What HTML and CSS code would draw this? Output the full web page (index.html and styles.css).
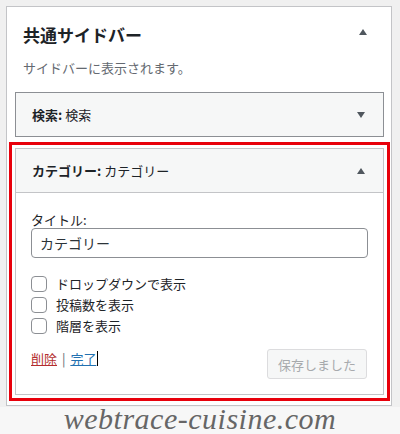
FILE: index.html
```html
<!DOCTYPE html>
<html lang="ja">
<head>
    <meta charset="UTF-8">
    <meta name="viewport" content="width=device-width, initial-scale=1.0">
    <title>共通サイドバー</title>
    <link rel="stylesheet" href="styles.css">
</head>
<body>
    <div class="sidebar">
        <div class="sidebar-head">
            <h2>共通サイドバー</h2>
            <span class="arrow up"></span>
        </div>
        <p class="sidebar-desc">サイドバーに表示されます。</p>

        <div class="widget">
            <div class="widget-top">
                <h3><b>検索:</b> 検索</h3>
                <span class="arrow down"></span>
            </div>
        </div>

        <div class="widget open">
            <div class="widget-top">
                <h3><b>カテゴリー:</b> カテゴリー</h3>
                <span class="arrow up"></span>
            </div>
            <div class="widget-body">
                <label class="field-label" for="title">タイトル:</label>
                <input type="text" id="title" class="field-input" value="カテゴリー">

                <div class="checks">
                    <label class="check"><input type="checkbox"><span>ドロップダウンで表示</span></label>
                    <label class="check"><input type="checkbox"><span>投稿数を表示</span></label>
                    <label class="check"><input type="checkbox"><span>階層を表示</span></label>
                </div>

                <div class="widget-actions">
                    <div class="links">
                        <a href="#" class="delete">削除</a>
                        <span class="sep">|</span>
                        <a href="#" class="done">完了</a><span class="caret"></span>
                    </div>
                    <button class="save-btn" disabled>保存しました</button>
                </div>
            </div>
        </div>
    </div>

    <div class="footer">webtrace-cuisine.com</div>
</body>
</html>
```

FILE: styles.css
```css
* {
    margin: 0;
    padding: 0;
    box-sizing: border-box;
}

body {
    background: #f0f0f0;
    font-family: "Noto Sans CJK JP", "Noto Sans", sans-serif;
    font-size: 13px;
    color: #1d2327;
}

.sidebar {
    margin: 6px 0 0 6px;
    width: 386px;
    height: 400px;
    background: #fff;
    border: 1px solid #c3c4c7;
    padding-top: 16px;
}

.sidebar-head {
    display: flex;
    align-items: center;
    justify-content: space-between;
    padding: 0 24px 0 16px;
    height: 24px;
}

.sidebar-head h2 {
    font-size: 17px;
    font-weight: bold;
    line-height: 24px;
}

.sidebar-head .arrow {
    margin-top: -6px;
}

.sidebar-desc {
    margin: 11px 0 14px;
    padding: 0 16px;
    color: #646970;
    line-height: 20px;
}

/* small triangles used by the toggles */
.arrow {
    width: 0;
    height: 0;
    border-left: 4px solid transparent;
    border-right: 4px solid transparent;
}

.arrow.up {
    border-bottom: 6px solid #50575e;
}

.arrow.down {
    border-top: 6px solid #50575e;
}

.widget {
    margin: 0 7px 11px 8px;
    border: 1px solid #8c8f94;
    background: #fff;
}

.widget.open {
    border-color: #c3c4c7;
    outline: 3px solid #e8000b;
    outline-offset: 3px;
}

.widget-top {
    display: flex;
    align-items: center;
    justify-content: space-between;
    height: 43px;
    padding: 0 18px 0 16px;
    background: #f6f7f7;
}

.widget.open .widget-top {
    height: 44px;
    border-bottom: 1px solid #c3c4c7;
}

.widget-top h3 {
    font-size: 13px;
    font-weight: normal;
    line-height: 20px;
}

.widget-top b {
    font-weight: bold;
}

.widget-body {
    padding: 19px 15px 15px;
}

.field-label {
    display: block;
    line-height: 16px;
}

.field-input {
    display: block;
    width: 100%;
    height: 30px;
    padding: 0 8px;
    border: 1px solid #8c8f94;
    border-radius: 4px;
    font-family: inherit;
    font-size: 14px;
    color: #2c3338;
    background: #fff;
}

.checks {
    margin-top: 15px;
}

.check {
    display: flex;
    align-items: center;
    gap: 9px;
    height: 21px;
}

.check input {
    -webkit-appearance: none;
    appearance: none;
    width: 16px;
    height: 16px;
    border: 1px solid #8c8f94;
    border-radius: 4px;
    background: #fff;
}

.widget-actions {
    display: flex;
    align-items: flex-start;
    justify-content: space-between;
    margin-top: 13px;
}

.links {
    line-height: 18px;
    padding-top: 1px;
}

.links a {
    text-decoration: underline;
}

.delete {
    color: #b32d2e;
}

.done {
    color: #2271b1;
}

.sep {
    color: #646970;
    margin: 0 2px;
}

.caret {
    display: inline-block;
    width: 1px;
    height: 15px;
    background: #000;
    vertical-align: -2px;
    margin-left: 1px;
}

.save-btn {
    width: 100px;
    height: 30px;
    margin-right: 1px;
    border: 1px solid #dcdcde;
    border-radius: 3px;
    background: #f6f7f7;
    color: #a7aaad;
    font-family: inherit;
    font-size: 13px;
}

.footer {
    margin-top: 1px;
    height: 27px;
    background: #f7f7f7;
    text-align: center;
    font-family: "Liberation Serif", serif;
    font-style: italic;
    font-size: 30px;
    line-height: 24px;
    color: #666;
    letter-spacing: 0.5px;
}
```
